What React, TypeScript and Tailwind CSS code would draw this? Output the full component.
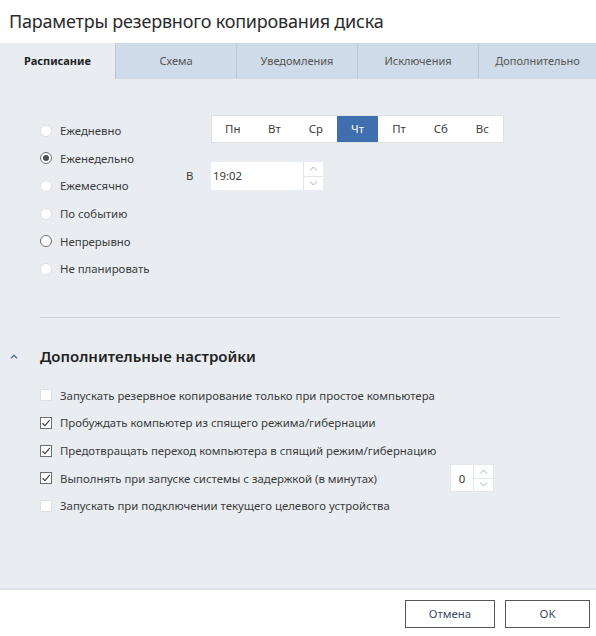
import React from "react";

const font = { fontFamily: '"Noto Sans", "Open Sans", sans-serif' };

const tabs = ["Расписание", "Схема", "Уведомления", "Исключения", "Дополнительно"];
const days = ["Пн", "Вт", "Ср", "Чт", "Пт", "Сб", "Вс"];
const modes = ["Ежедневно", "Еженедельно", "Ежемесячно", "По событию", "Непрерывно", "Не планировать"];
const options = [
  { label: "Запускать резервное копирование только при простое компьютера", checked: false },
  { label: "Пробуждать компьютер из спящего режима/гибернации", checked: true },
  { label: "Предотвращать переход компьютера в спящий режим/гибернацию", checked: true },
  { label: "Выполнять при запуске системы с задержкой (в минутах)", checked: true, spinner: true },
  { label: "Запускать при подключении текущего целевого устройства", checked: false },
];

function Chevron({ up }: { up?: boolean }) {
  return (
    <svg width="9" height="5" viewBox="0 0 9 5" fill="none">
      <path
        d={up ? "M1 4.5L4.5 1L8 4.5" : "M1 0.5L4.5 4L8 0.5"}
        stroke="#a8b0bc"
        strokeWidth="1"
      />
    </svg>
  );
}

function Spinner() {
  return (
    <div className="flex flex-col w-[20px] border-l border-[#e3e6ea]">
      <div className="flex-1 flex items-center justify-center border-b border-[#e3e6ea]">
        <Chevron up />
      </div>
      <div className="flex-1 flex items-center justify-center">
        <Chevron />
      </div>
    </div>
  );
}

function Radio({ checked, dark }: { checked?: boolean; dark?: boolean }) {
  return (
    <span
      className={`w-[12px] h-[12px] shrink-0 rounded-full border bg-white flex items-center justify-center ${
        checked || dark ? "border-[#6b6f75]" : "border-[#dde1e6]"
      }`}
    >
      {checked && <span className="w-[6px] h-[6px] rounded-full bg-[#4a4d52]" />}
    </span>
  );
}

function Checkbox({ checked }: { checked: boolean }) {
  return (
    <span
      className={`w-[12px] h-[12px] shrink-0 border bg-white flex items-center justify-center ${
        checked ? "border-[#6b6f75]" : "border-[#dde1e6]"
      }`}
    >
      {checked && (
        <svg width="10" height="10" viewBox="0 0 10 10" fill="none">
          <path d="M1.5 5.2L4 7.6L8.6 2.2" stroke="#3f4246" strokeWidth="1.2" />
        </svg>
      )}
    </span>
  );
}

export default function App() {
  return (
    <div className="w-[596px] h-[636px] bg-white flex flex-col text-[#3a3a3a]" style={font}>
      <div className="h-[43px] px-[9px] flex items-center text-[18px] text-[#2a2a2a] tracking-[-0.2px]">
        Параметры резервного копирования диска
      </div>

      <div className="flex h-[36px] bg-[#cfdbe8]">
        {tabs.map((t, i) => (
          <div
            key={t}
            className={`flex items-center justify-center text-[11px] ${
              i === 0
                ? "w-[115px] bg-[#e9edf2] font-bold text-[#222]"
                : "w-[121px] border-l border-[#b9c7d8] text-[#555]"
            } ${i === 4 ? "flex-1" : ""}`}
          >
            {t}
          </div>
        ))}
      </div>

      <div className="flex-1 bg-[#e9edf2] border-b-2 border-[#dde1ea] flex flex-col">
        <div className="flex pt-[36px]">
          <div className="pl-[40px] flex flex-col w-[186px] pt-[2px]">
            {modes.map((m, i) => (
              <div key={m} className="h-[27.6px] flex items-center gap-[8px] text-[11.4px] whitespace-nowrap">
                <Radio checked={i === 1} dark={i === 4} />
                <span>{m}</span>
              </div>
            ))}
          </div>
          <div className="flex flex-col">
            <div className="flex ml-[25px] h-[28px] w-[293px] bg-white border border-[#dde1e6]">
              {days.map((d, i) => (
                <div
                  key={d}
                  className={`flex-1 flex items-center justify-center text-[11.4px] ${
                    i === 3 ? "bg-[#3f6fae] text-white" : ""
                  }`}
                >
                  {d}
                </div>
              ))}
            </div>
            <div className="flex items-center mt-[19px]">
              <span className="w-[25px] text-[11.4px]">В</span>
              <div className="flex h-[28px] w-[112px] bg-white">
                <div className="flex-1 flex items-center pl-[2px] text-[11.4px]">19:02</div>
                <Spinner />
              </div>
            </div>
          </div>
        </div>

        <div className="ml-[40px] mr-[36px] mt-[34px] border-t border-[#c9d1dc]" />

        <div className="flex items-center mt-[29px] h-[20px]">
          <span className="w-[40px] flex justify-center pr-[12px]">
            <svg width="8" height="5" viewBox="0 0 8 5" fill="none">
              <path d="M1 4.2L4 1.2L7 4.2" stroke="#4a6a9a" strokeWidth="1.4" />
            </svg>
          </span>
          <span className="text-[15px] font-semibold text-[#222]">Дополнительные настройки</span>
        </div>

        <div className="flex flex-col pl-[40px] mt-[15px]">
          {options.map((o) => (
            <div key={o.label} className="h-[27.6px] flex items-center gap-[8px] text-[11.4px] whitespace-nowrap">
              <Checkbox checked={o.checked} />
              <span className="w-[382px]">{o.label}</span>
              {o.spinner && (
                <div className="flex h-[28px] w-[44px] bg-white border border-[#e3e6ea]">
                  <div className="flex-1 flex items-center justify-center text-[11.4px]">0</div>
                  <Spinner />
                </div>
              )}
            </div>
          ))}
        </div>
      </div>

      <div className="h-[46px] flex items-center justify-end gap-[10px] pr-[6px] pt-[2px]">
        <button className="w-[90px] h-[28px] border border-[#555] bg-white text-[11.4px] text-[#3a4a66]">
          Отмена
        </button>
        <button className="w-[85px] h-[28px] border border-[#555] bg-white text-[11.4px] text-[#3a4a66]">
          OK
        </button>
      </div>
    </div>
  );
}
